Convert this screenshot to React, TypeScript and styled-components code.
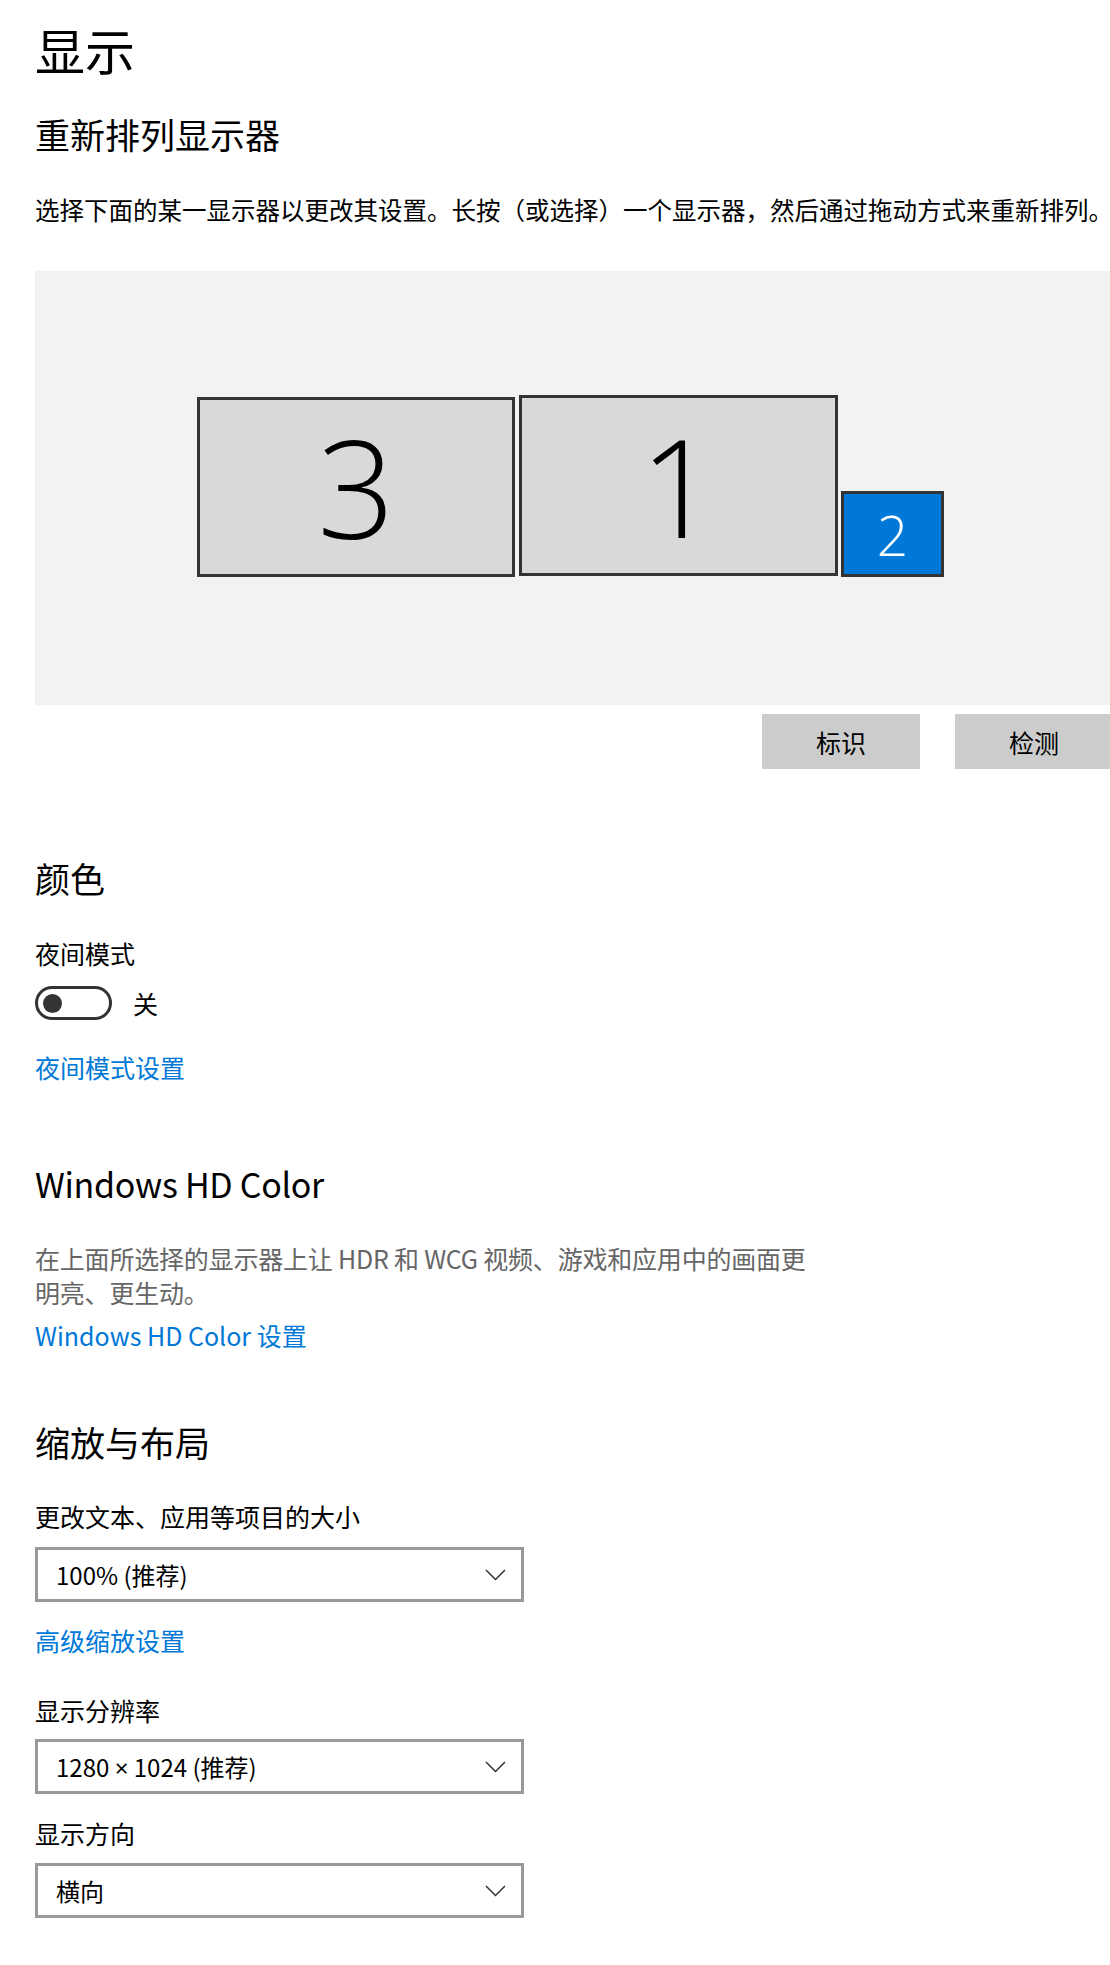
import styled, { createGlobalStyle } from "styled-components";

const GlobalStyle = createGlobalStyle`
  html, body {
    margin: 0;
    padding: 0;
    background: #ffffff;
    overflow: hidden;
  }
  body {
    font-family: "Noto Sans CJK SC", "Noto Sans", sans-serif;
    color: #000000;
  }
`;

const Page = styled.div`
  width: 1078px;
  padding: 17px 0 40px 35px;
  display: flex;
  flex-direction: column;
  align-items: flex-start;
`;

const Title = styled.h1`
  margin: 0;
  font-size: 50px;
  line-height: 64px;
  font-weight: 400;
`;

const SectionHeading = styled.h2<{ $mt: number; $latin?: boolean }>`
  margin: ${(p) => p.$mt}px 0 0;
  font-size: ${(p) => (p.$latin ? 34 : 35)}px;
  letter-spacing: ${(p) => (p.$latin ? "-0.3px" : "0")};
  line-height: 46px;
  font-weight: 400;
  white-space: nowrap;
`;

const Text = styled.div<{ $mt: number; $size?: number }>`
  margin-top: ${(p) => p.$mt}px;
  font-size: ${(p) => p.$size ?? 25}px;
  line-height: 34px;
  white-space: nowrap;
`;

const Hint = styled.p<{ $mt: number }>`
  margin: ${(p) => p.$mt}px 0 0;
  max-width: 785px;
  font-size: 25px;
  line-height: 34px;
  letter-spacing: -0.2px;
  color: #666666;
`;

const Link = styled.a<{ $mt: number }>`
  margin-top: ${(p) => p.$mt}px;
  font-size: 25px;
  line-height: 34px;
  color: #0078d7;
  text-decoration: none;
  cursor: pointer;
`;

const Canvas = styled.div`
  position: relative;
  margin-top: 44px;
  width: 100%;
  height: 434px;
  background: #f2f2f2;
`;

const Monitor = styled.div<{ $selected?: boolean }>`
  position: absolute;
  box-sizing: border-box;
  border: 3px solid #333333;
  background: ${(p) => (p.$selected ? "#0078d7" : "#d9d9d9")};
  color: ${(p) => (p.$selected ? "#ffffff" : "#000000")};
  display: flex;
  align-items: center;
  justify-content: center;
  font-family: "Open Sans", "Noto Sans", sans-serif;
  font-weight: 300;
  line-height: 1;
`;

const ButtonRow = styled.div`
  margin-top: 9px;
  width: 100%;
  display: flex;
  justify-content: flex-end;
  gap: 35px;
`;

const Button = styled.button`
  width: 158px;
  height: 55px;
  border: none;
  background: #cccccc;
  font-family: inherit;
  font-size: 25px;
  color: #000000;
  padding: 0;
`;

const ToggleRow = styled.div`
  margin-top: 16px;
  display: flex;
  align-items: center;
  gap: 21px;
  font-size: 25px;
  line-height: 34px;
`;

const Toggle = styled.div`
  box-sizing: border-box;
  width: 77px;
  height: 34px;
  border: 3px solid #333333;
  border-radius: 17px;
  padding-left: 5px;
  display: flex;
  align-items: center;
`;

const Knob = styled.span`
  width: 19px;
  height: 19px;
  border-radius: 50%;
  background: #333333;
`;

const Select = styled.div<{ $mt: number }>`
  margin-top: ${(p) => p.$mt}px;
  box-sizing: border-box;
  width: 489px;
  height: 55px;
  border: 3px solid #999999;
  padding: 0 15px 0 18px;
  display: flex;
  align-items: center;
  justify-content: space-between;
  font-size: 24px;
`;

const Times = styled.span`
  font-family: "Noto Sans", sans-serif;
`;

const monitors = [
  { id: 3, left: 162, top: 126, width: 318, height: 180, size: 136 },
  { id: 1, left: 484, top: 124, width: 319, height: 181, size: 136 },
  { id: 2, left: 806, top: 220, width: 103, height: 86, size: 55, selected: true },
];

const Chevron = () => (
  <svg width="21" height="12" viewBox="0 0 21 12">
    <polyline points="1,1 10.5,10.5 20,1" fill="none" stroke="#333" strokeWidth="1.5" />
  </svg>
);

export default function App() {
  return (
    <>
      <GlobalStyle />
      <Page>
        <Title>显示</Title>
        <SectionHeading $mt={30}>重新排列显示器</SectionHeading>
        <Text $mt={36} $size={24.5}>
          选择下面的某一显示器以更改其设置。长按（或选择）一个显示器，然后通过拖动方式来重新排列。
        </Text>
        <Canvas>
          {monitors.map((m) => (
            <Monitor
              key={m.id}
              $selected={m.selected}
              style={{ left: m.left, top: m.top, width: m.width, height: m.height, fontSize: m.size }}
            >
              {m.id}
            </Monitor>
          ))}
        </Canvas>
        <ButtonRow>
          <Button>标识</Button>
          <Button>检测</Button>
        </ButtonRow>

        <SectionHeading $mt={86}>颜色</SectionHeading>
        <Text $mt={35}>夜间模式</Text>
        <ToggleRow>
          <Toggle>
            <Knob />
          </Toggle>
          <span>关</span>
        </ToggleRow>
        <Link $mt={30}>夜间模式设置</Link>

        <SectionHeading $mt={77} $latin>
          Windows HD Color
        </SectionHeading>
        <Hint $mt={34}>
          在上面所选择的显示器上让 HDR 和 WCG 视频、游戏和应用中的画面更明亮、更生动。
        </Hint>
        <Link $mt={9}>Windows HD Color 设置</Link>

        <SectionHeading $mt={67}>缩放与布局</SectionHeading>
        <Text $mt={34}>更改文本、应用等项目的大小</Text>
        <Select $mt={14}>
          <span>100% (推荐)</span>
          <Chevron />
        </Select>
        <Link $mt={21}>高级缩放设置</Link>
        <Text $mt={36}>显示分辨率</Text>
        <Select $mt={12}>
          <span>
            1280 <Times>×</Times> 1024 (推荐)
          </span>
          <Chevron />
        </Select>
        <Text $mt={22}>显示方向</Text>
        <Select $mt={13}>
          <span>横向</span>
          <Chevron />
        </Select>
      </Page>
    </>
  );
}
